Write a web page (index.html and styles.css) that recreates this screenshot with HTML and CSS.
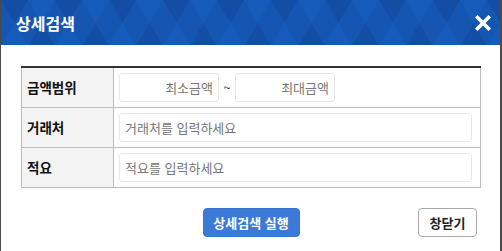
FILE: index.html
```html
<!DOCTYPE html>
<html lang="ko">
<head>
  <meta charset="UTF-8" />
  <title>상세검색</title>
  <link rel="stylesheet" href="styles.css">
</head>
<body>
  <div class="dialog">
    <div class="dialog-head">
      <h1>상세검색</h1>
      <button class="close" type="button" aria-label="닫기">
        <svg width="16" height="16" viewBox="0 0 16 16">
          <path d="M2.5 2.5 L13.5 13.5 M13.5 2.5 L2.5 13.5" stroke="#fff" stroke-width="3.6" stroke-linecap="square" fill="none" />
        </svg>
      </button>
    </div>

    <div class="dialog-body">
      <table class="search-table">
        <tr>
          <th>금액범위</th>
          <td>
            <div class="range">
              <input class="field amount" type="text" placeholder="최소금액">
              <span class="tilde">~</span>
              <input class="field amount" type="text" placeholder="최대금액">
            </div>
          </td>
        </tr>
        <tr>
          <th>거래처</th>
          <td><input class="field wide" type="text" placeholder="거래처를 입력하세요"></td>
        </tr>
        <tr>
          <th>적요</th>
          <td><input class="field wide" type="text" placeholder="적요를 입력하세요"></td>
        </tr>
      </table>

      <div class="actions">
        <span></span>
        <button class="btn btn-primary" type="button">상세검색 실행</button>
        <button class="btn btn-close" type="button">창닫기</button>
      </div>
    </div>
  </div>
</body>
</html>
```

FILE: styles.css
```css
html, body {
  margin: 0;
  padding: 0;
}
body {
  background: #4a4a4a;
  font-family: "Noto Sans CJK KR", "Noto Sans", sans-serif;
  width: 502px;
  height: 251px;
  overflow: hidden;
}
.dialog {
  margin-left: 1px;
  width: 499px;
  height: 251px;
  background: #fff;
  display: flex;
  flex-direction: column;
}
.dialog-head {
  height: 45px;
  display: flex;
  align-items: center;
  justify-content: space-between;
  padding: 0 9px 0 15px;
  background-color: #1456b2;
  background-image: url("data:image/svg+xml,%3Csvg xmlns='http://www.w3.org/2000/svg' width='54' height='46'%3E%3Cpolygon points='0,0 27,0 13.5,23' fill='%23134ea4'/%3E%3Cpolygon points='27,0 54,0 40.5,23' fill='%23165bba'/%3E%3Cpolygon points='0,46 13.5,23 27,46' fill='%23165bba'/%3E%3Cpolygon points='27,46 40.5,23 54,46' fill='%23134ea4'/%3E%3C/svg%3E");
}
.dialog-head h1 {
  margin: 0;
  color: #fff;
  font-size: 16px;
  font-weight: bold;
  line-height: 20px;
}
.close {
  border: 0;
  background: none;
  padding: 0;
  width: 16px;
  height: 16px;
  display: flex;
  cursor: pointer;
}
.dialog-body {
  padding: 21px 19px 0 20px;
}
.search-table {
  width: 460px;
  border-collapse: collapse;
  border-top: 2px solid #333;
}
.search-table tr {
  height: 40px;
}
.search-table th,
.search-table td {
  border: 1px solid #bcbcbc;
  padding: 0 8px 0 5px;
}
.search-table tr:first-child th,
.search-table tr:first-child td {
  border-top: 0;
}
.search-table th {
  width: 78px;
  background: #f3f3f3;
  text-align: left;
  font-size: 13.5px;
  font-weight: bold;
  color: #111;
}
.range {
  display: flex;
  align-items: center;
}
.field {
  box-sizing: border-box;
  height: 29px;
  border: 1px solid #e6e6e6;
  border-radius: 3px;
  padding: 0 5px;
  font-family: inherit;
  font-size: 13px;
  color: #333;
  outline: none;
}
.field::placeholder {
  color: #777;
}
.amount {
  width: 100px;
  text-align: right;
}
.tilde {
  width: 16px;
  text-align: center;
  font-size: 13px;
  color: #333;
}
.wide {
  width: 100%;
}
.actions {
  margin-top: 20px;
  display: grid;
  grid-template-columns: 1fr auto 1fr;
  align-items: center;
}
.btn {
  height: 29px;
  border-radius: 4px;
  font-family: inherit;
  font-size: 13px;
  font-weight: bold;
  padding: 0;
  cursor: pointer;
}
.btn-primary {
  width: 97px;
  border: 1px solid #3774d0;
  background: #3b7ad6;
  color: #fff;
}
.btn-close {
  justify-self: end;
  margin-right: 4px;
  width: 59px;
  border: 1px solid #aaa;
  background: #fff;
  color: #222;
}
```
